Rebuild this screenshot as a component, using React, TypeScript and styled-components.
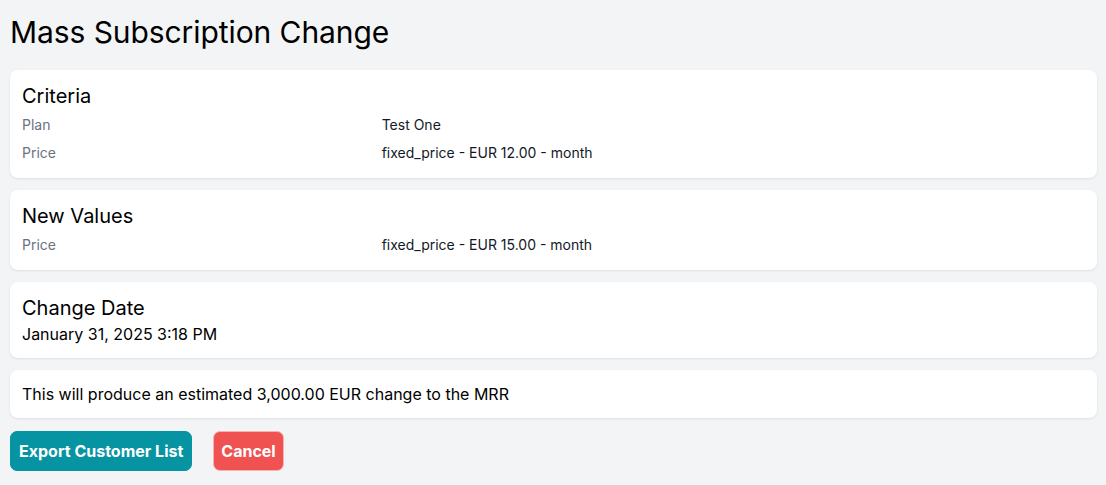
import React from "react";
import styled, { createGlobalStyle } from "styled-components";

const GlobalStyle = createGlobalStyle`
  html, body {
    margin: 0;
    padding: 0;
    background: #f3f4f6;
  }
  body {
    font-family: Inter, "Noto Sans", "Liberation Sans", sans-serif;
    color: #111827;
  }
`;

type Row = { label: string; value: string };

const criteria: Row[] = [
  { label: "Plan", value: "Test One" },
  { label: "Price", value: "fixed_price - EUR 12.00 - month" },
];

const newValues: Row[] = [{ label: "Price", value: "fixed_price - EUR 15.00 - month" }];

export default function App() {
  return (
    <>
      <GlobalStyle />
      <PageStl>
        <TituloStl>Mass Subscription Change</TituloStl>
        <CardStl>
          <CardTitleStl>Criteria</CardTitleStl>
          <DetailList rows={criteria} />
        </CardStl>
        <CardStl>
          <CardTitleStl>New Values</CardTitleStl>
          <DetailList rows={newValues} />
        </CardStl>
        <CardStl>
          <CardTitleStl>Change Date</CardTitleStl>
          <TextStl>January 31, 2025 3:18 PM</TextStl>
        </CardStl>
        <CardStl>
          <TextStl>This will produce an estimated 3,000.00 EUR change to the MRR</TextStl>
        </CardStl>
        <AcoesStl>
          <BotaoStl $cor="teal">Export Customer List</BotaoStl>
          <BotaoStl $cor="red">Cancel</BotaoStl>
        </AcoesStl>
      </PageStl>
    </>
  );
}

function DetailList({ rows }: { rows: Row[] }) {
  return (
    <ListaStl>
      {rows.map((r) => (
        <LinhaStl key={r.label}>
          <RotuloStl>{r.label}</RotuloStl>
          <ValorStl>{r.value}</ValorStl>
        </LinhaStl>
      ))}
    </ListaStl>
  );
}

const PageStl = styled.div`
    display: flex;
    flex-direction: column;
    gap: 12px;
    padding: 14px 9px 14px 10px;
`;

const TituloStl = styled.h1`
    margin: 0 0 8px 0;
    font-size: 30px;
    line-height: 36px;
    font-weight: 400;
    letter-spacing: -0.08px;
    color: #000;
`;

const CardStl = styled.div`
    background: #fff;
    border-radius: 8px;
    padding: 12px;
    box-shadow: 0 1px 3px 0 rgba(0, 0, 0, 0.08), 0 1px 2px -1px rgba(0, 0, 0, 0.06);
`;

const CardTitleStl = styled.h2`
    margin: 0;
    font-size: 20px;
    line-height: 28px;
    font-weight: 400;
    color: #000;
`;

const ListaStl = styled.dl`
    margin: 0;
`;

const LinhaStl = styled.div`
    display: grid;
    grid-template-columns: repeat(3, minmax(0, 1fr));
    gap: 16px;
    padding: 5px 0 3px;
    font-size: 14px;
    line-height: 20px;
`;

const RotuloStl = styled.dt`
    color: #6b7280;
`;

const ValorStl = styled.dd`
    margin: 0;
    grid-column: span 2;
    color: #111827;
`;

const TextStl = styled.p`
    margin: 0;
    font-size: 16px;
    line-height: 24px;
    color: #000;
`;

const AcoesStl = styled.div`
    display: flex;
    gap: 21px;
    margin-top: 1px;
`;

const BotaoStl = styled.button<{ $cor: "teal" | "red" }>`
    height: 40px;
    padding: 0 ${(p) => (p.$cor === "teal" ? "8px" : "7px")};
    border-radius: 7px;
    font-family: Inter, "Noto Sans", "Liberation Sans", sans-serif;
    font-size: 16px;
    font-weight: 700;
    color: #fff;
    cursor: pointer;
    background: ${(p) => (p.$cor === "teal" ? "#0694a2" : "#f05252")};
    border: 1px solid ${(p) => (p.$cor === "teal" ? "#0694a2" : "#f3b4b4")};
`;
